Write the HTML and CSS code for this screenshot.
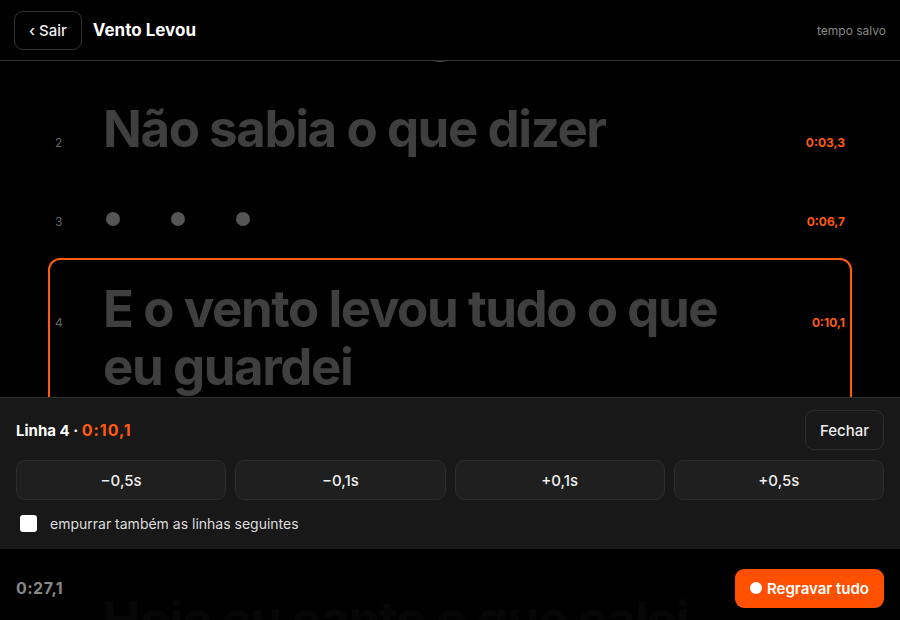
FILE: index.html
```html
<!DOCTYPE html>
<html lang="pt">
<head>
<meta charset="utf-8">
<title>Vento Levou</title>
<link rel="stylesheet" href="styles.css">
</head>
<body>
<div class="app">
  <header class="topbar">
    <button class="back-btn">‹ Sair</button>
    <h1 class="title">Vento Levou</h1>
    <span class="saved">tempo salvo</span>
  </header>

  <main class="lyrics">
    <div class="rows">
      <div class="row first">
        <span class="num">1</span>
        <p class="text">Eu te vi de longe pela</p>
        <span class="time">0:00,0</span>
      </div>
      <div class="row">
        <span class="num">2</span>
        <p class="text">Não sabia o que dizer</p>
        <span class="time">0:03,3</span>
      </div>
      <div class="row">
        <span class="num">3</span>
        <div class="dots"><i></i><i></i><i></i></div>
        <span class="time">0:06,7</span>
      </div>
      <div class="row active">
        <span class="num">4</span>
        <p class="text">E o vento levou tudo o que eu guardei</p>
        <span class="time">0:10,1</span>
      </div>
      <div class="row after-active">
        <span class="num">5</span>
        <p class="text">Hoje eu canto o que calei</p>
        <span class="time">0:14,2</span>
      </div>
    </div>
  </main>

  <div class="sheet">
    <section class="panel">
      <div class="panel-head">
        <div class="panel-title">Linha 4 · <span class="accent">0:10,1</span></div>
        <button class="ghost-btn">Fechar</button>
      </div>
      <div class="nudges">
        <button class="nudge">−0,5s</button>
        <button class="nudge">−0,1s</button>
        <button class="nudge">+0,1s</button>
        <button class="nudge">+0,5s</button>
      </div>
      <label class="check">
        <span class="box"></span>
        <span>empurrar também as linhas seguintes</span>
      </label>
    </section>
    <footer class="footer">
      <span class="elapsed">0:27,1</span>
      <button class="record"><span class="rec-dot"></span>Regravar tudo</button>
    </footer>
  </div>
</div>
</body>
</html>
```

FILE: styles.css
```css
* { box-sizing: border-box; }

html, body {
  margin: 0;
  padding: 0;
  background: #000;
}

body {
  font-family: Inter, "Noto Sans", "Liberation Sans", sans-serif;
  color: #eee;
}

button {
  font-family: inherit;
  cursor: pointer;
}

.app {
  position: relative;
  width: 900px;
  height: 620px;
  overflow: hidden;
  background: #000;
  display: flex;
  flex-direction: column;
}

/* Header */
.topbar {
  position: relative;
  z-index: 2;
  height: 61px;
  flex: none;
  display: flex;
  align-items: center;
  gap: 11px;
  padding: 0 14px;
  background: #000;
  border-bottom: 1px solid #333;
}

.back-btn {
  height: 39px;
  padding: 0 14px;
  background: #000;
  color: #eee;
  border: 1px solid #333;
  border-radius: 9px;
  font-size: 15px;
  font-weight: 500;
}

.title {
  margin: 0;
  font-size: 17px;
  font-weight: 700;
  color: #fff;
  flex: 1;
}

.saved {
  font-size: 12px;
  color: #888;
}

/* Lyrics */
.lyrics {
  flex: 1;
  overflow: hidden;
  position: relative;
  z-index: 1;
}

.rows {
  margin: -85px 48px 0;
  display: flex;
  flex-direction: column;
}

.row {
  display: grid;
  grid-template-columns: 48px 1fr auto;
  align-items: baseline;
  padding: 20px 5px 20px 5px;
  border: 2px solid transparent;
  border-radius: 12px;
}

.row.first {
  padding-top: 26px;
  padding-bottom: 14px;
}

.row.active {
  border-color: #ff5a0f;
  padding-bottom: 40px;
}

.row.after-active {
  margin-top: 131px;
}

.num {
  font-size: 12px;
  color: #666;
}

.text {
  margin: 0;
  max-width: 660px;
  font-size: 51px;
  line-height: 58px;
  font-weight: 700;
  letter-spacing: -0.028em;
  color: #3f3f3f;
}

.time {
  font-size: 12px;
  font-weight: 700;
  color: #ff5a0f;
}

.dots {
  height: 34px;
  display: flex;
  align-items: center;
  gap: 51px;
  padding-left: 3px;
}

.dots i {
  width: 14px;
  height: 14px;
  border-radius: 50%;
  background: #555;
}

/* Bottom sheet */
.sheet {
  position: absolute;
  left: 0;
  right: 0;
  bottom: 0;
  z-index: 3;
}

.panel {
  background: #181818;
  border-top: 1px solid #2e2e2e;
  padding: 12px 16px 16px;
  height: 152px;
}

.panel-head {
  display: flex;
  align-items: center;
  justify-content: space-between;
}

.panel-title {
  font-size: 15px;
  font-weight: 700;
  color: #fff;
}

.accent {
  font-size: 16px;
  color: #ff5a0f;
  letter-spacing: 0.06em;
}

.ghost-btn {
  height: 40px;
  padding: 0 14px;
  background: #181818;
  color: #eee;
  border: 1px solid #2c2c2c;
  border-radius: 9px;
  font-size: 15px;
  font-weight: 500;
}

.nudges {
  margin-top: 10px;
  display: grid;
  grid-template-columns: repeat(4, 1fr);
  gap: 9px;
}

.nudge {
  height: 40px;
  background: #1f1f1f;
  border: 1px solid #2c2c2c;
  border-radius: 9px;
  color: #eee;
  font-size: 15px;
  font-weight: 500;
}

.check {
  margin-top: 15px;
  display: flex;
  align-items: center;
  gap: 13px;
  padding-left: 4px;
  font-size: 14px;
  color: #ddd;
}

.box {
  width: 17px;
  height: 17px;
  background: #fff;
  border-radius: 3px;
  flex: none;
}

.footer {
  height: 71px;
  background: rgba(0, 0, 0, 0.9);
  display: flex;
  align-items: center;
  justify-content: space-between;
  padding: 7px 16px 0;
}

.elapsed {
  font-size: 16px;
  font-weight: 700;
  color: #888;
  letter-spacing: 0.03em;
}

.record {
  height: 39px;
  padding: 0 15px;
  display: flex;
  align-items: center;
  gap: 5px;
  background: #ff5000;
  border: none;
  border-radius: 9px;
  color: #fff;
  font-size: 15px;
  font-weight: 600;
}

.rec-dot {
  width: 12px;
  height: 12px;
  border-radius: 50%;
  background: #fff;
}
```
